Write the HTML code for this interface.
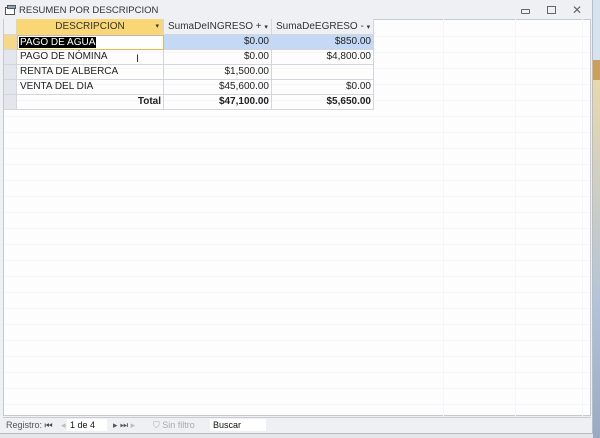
<!DOCTYPE html>
<html><head><style>
*{margin:0;padding:0;box-sizing:border-box}
body{width:600px;height:438px;overflow:hidden;background:#e4e6ea;font-family:"Liberation Sans",sans-serif;font-size:10px;position:relative}
.win{position:absolute;left:0;top:0;width:593px;height:434px;background:#eef0f3;border-right:1px solid #b8bcc4;border-bottom:1px solid #b8bcc4}
.desk{position:absolute;left:593px;top:0;width:7px;height:438px;background:linear-gradient(#d7e3ef 0,#d7e3ef 60px,#c8a060 60px,#c8a060 80px,#e8d8b0 80px,#b4c4d8 300px,#9aaac0 438px)}
.title{position:absolute;left:19px;top:5px;font-size:9.5px;color:#333}
.grid{position:absolute;left:3px;top:19px;width:588px;height:397px;background:#fdfdfe;border:1px solid #c5c9d0;
background-image:repeating-linear-gradient(to bottom,transparent 0,transparent 15px,#f5f6f8 15px,#f5f6f8 16px);background-position:0 1px}
.vl{position:absolute;top:19px;width:1px;height:397px;background:#f5f6f8}
.row{position:absolute;left:4px;height:15px;display:flex}
.c{border-right:1px solid #d3d6dc;border-bottom:1px solid #d3d6dc;height:15px;line-height:14px;white-space:nowrap;overflow:hidden;font-size:10px;color:#222}
.h .c{height:16px;line-height:16px}
.s{width:13px;background:#e3e6ec}
.d{width:147px;padding-left:3px}
.i{width:108px;text-align:right;padding-right:2px}
.e{width:102px;text-align:right;padding-right:2px}
.h .c{background:#eef0f4;color:#333;text-align:left;padding-left:4px}
.status{position:absolute;left:3px;top:417px;width:588px;height:15px;background:#eef0f3;border-top:1px solid #c8ccd2;font-size:9px;color:#555;line-height:14px}
</style></head><body>
<div class="win">
<svg style="position:absolute;left:5px;top:5px" width="11" height="10"><rect x="0.5" y="2.5" width="9" height="7" fill="#fff" stroke="#555"/><rect x="2.5" y="0.5" width="8" height="3" fill="#8ab" stroke="#555"/></svg>
<div class="title">RESUMEN POR DESCRIPCION</div>
<div style="position:absolute;left:521px;top:9px;width:9px;height:5px;border:1px solid #666;border-radius:1px"></div>
<div style="position:absolute;left:547px;top:6px;width:9px;height:8px;border:1px solid #666"></div>
<div style="position:absolute;left:572px;top:3px;font-size:12px;color:#666">✕</div>
<div class="grid"></div>
<div class="vl" style="left:443px"></div><div class="vl" style="left:515px"></div><div class="vl" style="left:582px"></div>
<div class="row h" style="top:19px;height:16px"><div class="c s"></div><div class="c d" style="background:#f9d776;text-align:center;padding-left:0;position:relative">DESCRIPCION<span style="position:absolute;right:4px;font-size:7px">▾</span></div><div class="c i" style="text-align:left;padding-left:4px">SumaDeINGRESO + <span style="font-size:7px">▾</span></div><div class="c e" style="text-align:left;padding-left:4px">SumaDeEGRESO - <span style="font-size:7px">▾</span></div></div>
<div class="row" style="top:35px"><div class="c s" style="background:#f4d98a"></div><div class="c d" style="border:1px solid #e8b848;padding-left:1px;background:#fff"><span style="background:#000;color:#fff;padding:0 1px">PAGO DE AGUA</span></div><div class="c i" style="background:#c3d9f5">$0.00</div><div class="c e" style="background:#c3d9f5">$850.00</div></div>
<div class="row" style="top:50px"><div class="c s"></div><div class="c d">PAGO DE NÓMINA</div><div class="c i">$0.00</div><div class="c e">$4,800.00</div></div>
<div class="row" style="top:65px"><div class="c s"></div><div class="c d">RENTA DE ALBERCA</div><div class="c i">$1,500.00</div><div class="c e"></div></div>
<div class="row" style="top:80px"><div class="c s"></div><div class="c d">VENTA DEL DIA</div><div class="c i">$45,600.00</div><div class="c e">$0.00</div></div>
<div class="row" style="top:95px;font-weight:bold"><div class="c s"></div><div class="c d" style="text-align:right;padding-right:2px;font-weight:bold">Total</div><div class="c i" style="font-weight:bold">$47,100.00</div><div class="c e" style="font-weight:bold">$5,650.00</div></div>
<div style="position:absolute;left:136px;top:53px;font-size:11px;color:#333">I</div>
<div class="status">
<span style="position:absolute;left:3px">Registro: <span style="color:#444">⏮</span></span>
<span style="position:absolute;left:58px;color:#bbb">◂</span>
<div style="position:absolute;left:64px;top:1px;width:40px;height:12px;background:#fff;color:#111;padding-left:3px;line-height:12px">1 de 4</div>
<span style="position:absolute;left:110px">▸ ⏭ <span style="color:#bbb">▸</span></span>
<span style="position:absolute;left:150px;color:#aaa">⛉ Sin filtro</span>
<div style="position:absolute;left:207px;top:1px;width:56px;height:12px;background:#fff;color:#111;padding-left:3px;line-height:12px">Buscar</div>
</div>
</div>
<div class="desk"></div>
</body></html>
